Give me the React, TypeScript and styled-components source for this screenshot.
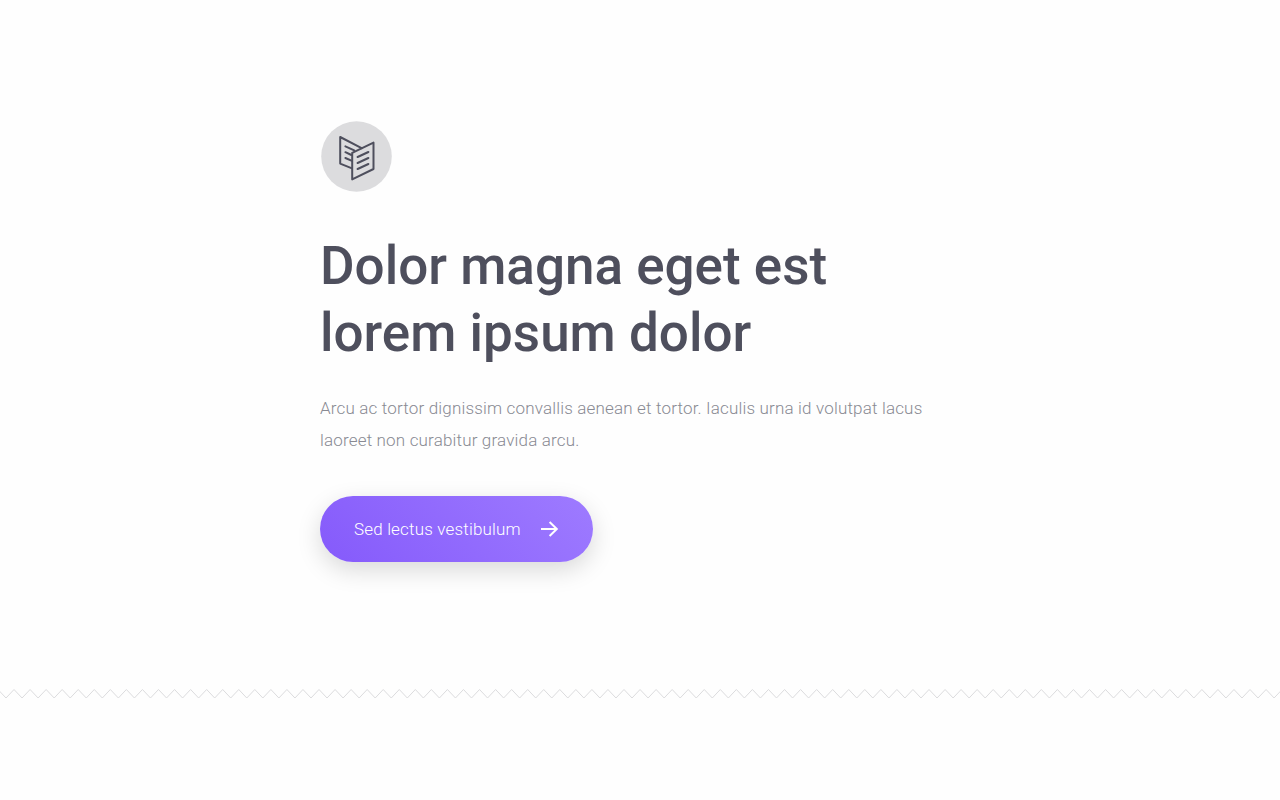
import React from "react";
import styled, { createGlobalStyle } from "styled-components";

const GlobalStyle = createGlobalStyle`
  * { box-sizing: border-box; }
  body {
    margin: 0;
    background: #fefefe;
    font-family: Roboto, "Liberation Sans", sans-serif;
  }
`;

const Page = styled.main`
  padding-top: 120px;
`;

const Hero = styled.section`
  width: 50%;
  min-width: 300px;
  margin: 0 auto;
`;

const Badge = styled.svg`
  display: block;
  width: 72px;
  height: 72px;
`;

const Title = styled.h1`
  margin: 41px 0 0;
  color: #4e4f5d;
  font-size: 53px;
  font-weight: 500;
  line-height: 67px;
`;

const Lead = styled.p`
  margin: 25px 0 0;
  color: #898a93;
  font-size: 17px;
  font-weight: 300;
  line-height: 32px;
  letter-spacing: 0.01em;
`;

const Action = styled.a`
  display: inline-flex;
  align-items: center;
  gap: 20px;
  height: 66px;
  margin-top: 40px;
  padding: 0 34px;
  border-radius: 33px;
  background: linear-gradient(45deg, #855afb, #9e7bff);
  box-shadow: 0 8px 24px rgba(0, 0, 0, 0.15);
  color: #ffffff;
  font-size: 17px;
  font-weight: 300;
  letter-spacing: 0.01em;
  text-decoration: none;
`;

const Arrow = styled.svg`
  display: block;
  width: 18px;
  height: 18px;
`;

const Divider = styled.svg`
  display: block;
  width: 100%;
  height: 12px;
  margin-top: 126px;
`;

const STEP = 8.026;
const zigzag = Array.from({ length: 500 }, (_, i) => {
  const x = (6 + (i - 1) * STEP).toFixed(2);
  return `${x},${i % 2 ? 10 : 1.5}`;
}).join(" ");

export default function App() {
  return (
    <>
      <GlobalStyle />
      <Page>
        <Hero>
          <Badge viewBox="0 0 72 72" aria-hidden="true">
            <circle cx="36.5" cy="36.5" r="35.3" fill="#dcdcde" />
            <g
              fill="none"
              stroke="#4e4f5d"
              strokeWidth="2"
              strokeLinecap="round"
              strokeLinejoin="round"
            >
              <path d="M32 48.4 20.2 43.6V17L41.6 28.2" />
              <path d="M32.2 32.8 53.5 22.6V49L32.2 59.4Z" />
              <path d="M25.4 26.4 34.2 30.4M25.4 32.2 31.4 35M25.4 38 31.4 40.6" />
              <path d="M37.6 37 48.4 32M37.6 43 48.4 38M37.6 49 48.4 44" />
            </g>
          </Badge>
          <Title>
            Dolor magna eget est
            <br />
            lorem ipsum dolor
          </Title>
          <Lead>
            Arcu ac tortor dignissim convallis aenean et tortor. Iaculis urna id
            volutpat lacus laoreet non curabitur gravida arcu.
          </Lead>
          <Action href="#">
            Sed lectus vestibulum
            <Arrow viewBox="0 0 18 18" aria-hidden="true">
              <path
                d="M0 9H16M8.6 2 15.8 9 8.6 16"
                fill="none"
                stroke="#ffffff"
                strokeWidth="2"
              />
            </Arrow>
          </Action>
        </Hero>
        <Divider aria-hidden="true">
          <polyline points={zigzag} fill="none" stroke="#dcdcde" strokeWidth="1" />
        </Divider>
      </Page>
    </>
  );
}
